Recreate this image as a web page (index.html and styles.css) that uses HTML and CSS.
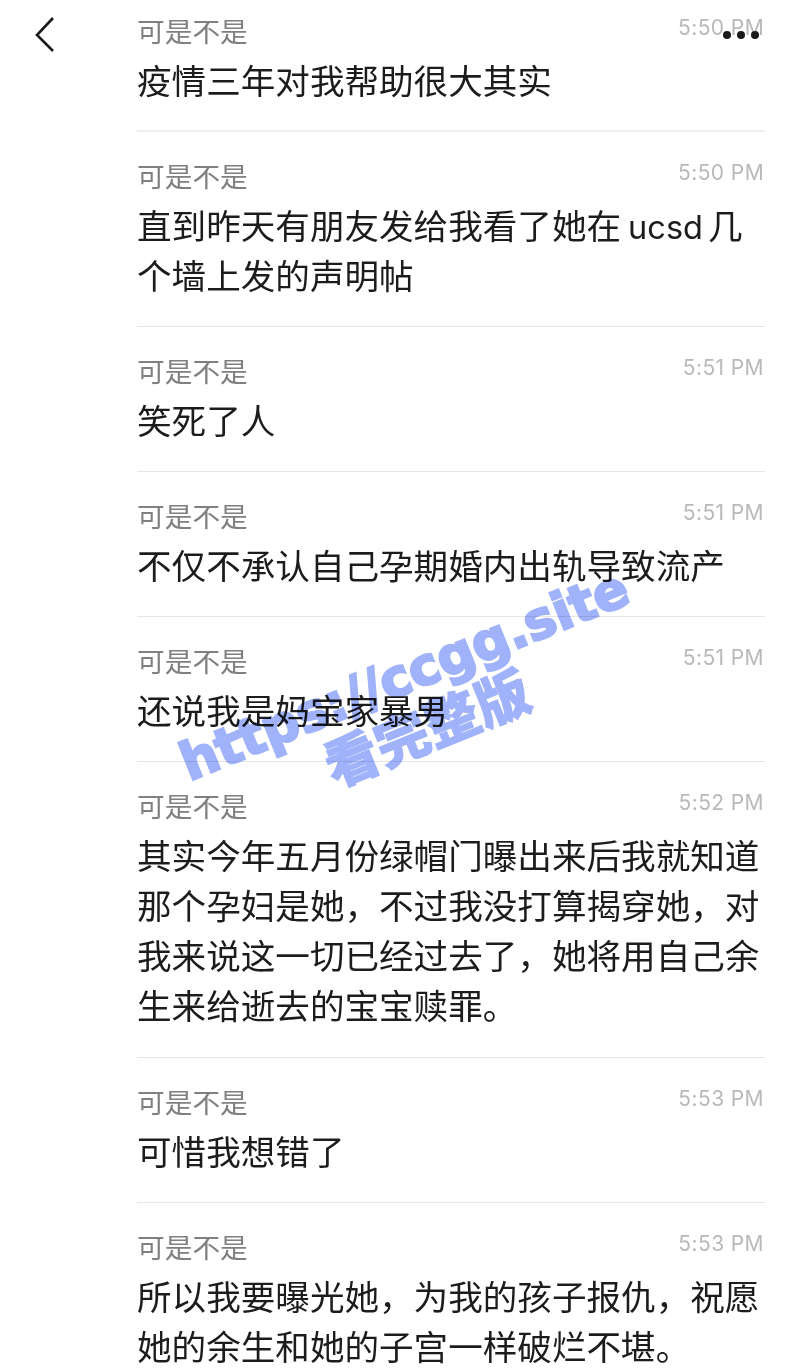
FILE: index.html
```html
<!DOCTYPE html>
<html lang="zh-CN">
<head>
  <meta charset="UTF-8">
  <meta name="viewport" content="width=device-width, initial-scale=1">
  <title>可是不是</title>
  <link rel="stylesheet" href="styles.css">
</head>
<body>
  <div class="page">
    <svg class="back" width="24" height="38" viewBox="0 0 24 38">
      <path d="M20 2 L4 19 L20 35" fill="none" stroke="#1a1a1a" stroke-width="2.6"/>
    </svg>
    <div class="more"><i></i><i></i><i></i></div>

    <div class="list">
      <div class="msg">
        <div class="head"><span class="name">可是不是</span><span class="time">5:50 PM</span></div>
        <p>疫情三年对我帮助很大其实</p>
      </div>
      <div class="msg">
        <div class="head"><span class="name">可是不是</span><span class="time">5:50 PM</span></div>
        <p>直到昨天有朋友发给我看了她在<span class="latin">ucsd</span>几个墙上发的声明帖</p>
      </div>
      <div class="msg">
        <div class="head"><span class="name">可是不是</span><span class="time">5:51 PM</span></div>
        <p>笑死了人</p>
      </div>
      <div class="msg">
        <div class="head"><span class="name">可是不是</span><span class="time">5:51 PM</span></div>
        <p>不仅不承认自己孕期婚内出轨导致流产</p>
      </div>
      <div class="msg">
        <div class="head"><span class="name">可是不是</span><span class="time">5:51 PM</span></div>
        <p>还说我是妈宝家暴男</p>
      </div>
      <div class="msg">
        <div class="head"><span class="name">可是不是</span><span class="time">5:52 PM</span></div>
        <p>其实今年五月份绿帽门曝出来后我就知道那个孕妇是她，不过我没打算揭穿她，对我来说这一切已经过去了，她将用自己余生来给逝去的宝宝赎罪。</p>
      </div>
      <div class="msg">
        <div class="head"><span class="name">可是不是</span><span class="time">5:53 PM</span></div>
        <p>可惜我想错了</p>
      </div>
      <div class="msg">
        <div class="head"><span class="name">可是不是</span><span class="time">5:53 PM</span></div>
        <p>所以我要曝光她，为我的孩子报仇，祝愿她的余生和她的子宫一样破烂不堪。</p>
      </div>
    </div>

    <div class="stamps">
      <div class="stamp stamp-url">https://ccgg.site</div>
      <div class="stamp stamp-cn">看完整版</div>
    </div>
  </div>
</body>
</html>
```

FILE: styles.css
```css
* {
  box-sizing: border-box;
}

body {
  margin: 0;
  background: #fff;
  font-family: "Noto Sans CJK SC", "Liberation Sans", sans-serif;
}

.page {
  position: relative;
  height: 1369px;
  overflow: hidden;
}

.back {
  position: absolute;
  left: 33px;
  top: 16px;
}

.more {
  position: absolute;
  left: 723px;
  top: 31px;
  display: flex;
  gap: 6px;
}

.more i {
  width: 8px;
  height: 8px;
  border-radius: 50%;
  background: #1a1a1a;
}

.list {
  margin: 0 35px 0 137px;
}

.msg {
  padding: 28px 0 27.2px;
  border-bottom: 1px solid #e6e6e6;
}

.msg:first-child {
  padding: 15px 0 25.6px;
  border-bottom: 2px solid #eee;
}

.head {
  display: flex;
  justify-content: space-between;
  height: 39px;
  line-height: 30px;
}

.name {
  font-size: 27.7px;
  color: #808080;
}

.time {
  margin: -2px 1px 0 0;
  font-family: Inter, "Liberation Sans", sans-serif;
  font-size: 21px;
  letter-spacing: 0.4px;
  color: #b9b9b9;
}

.msg p {
  margin: 0;
  font-size: 34.6px;
  line-height: 50px;
  color: #1c1c1c;
}

.latin {
  margin: 0 5px 0 7px;
  font-family: Inter, "Liberation Sans", sans-serif;
  font-size: 32.5px;
  line-height: 1;
}

/* overlay text, multiplied as one layer so the writing shows through */
.stamps {
  position: absolute;
  inset: 0;
  mix-blend-mode: multiply;
}

.stamp {
  position: absolute;
  white-space: nowrap;
  font-weight: 700;
  color: #9fb2fa;
  transform: rotate(-22deg);
}

.stamp-url {
  left: 165px;
  top: 642px;
  font-family: "DejaVu Sans", sans-serif;
  font-size: 52px;
  line-height: 66px;
  -webkit-text-stroke: 2.4px #9fb2fa;
}

.stamp-cn {
  left: 318px;
  top: 695px;
  font-size: 54px;
  line-height: 62px;
  font-weight: 900;
  -webkit-text-stroke: 1px #9fb2fa;
}
```
